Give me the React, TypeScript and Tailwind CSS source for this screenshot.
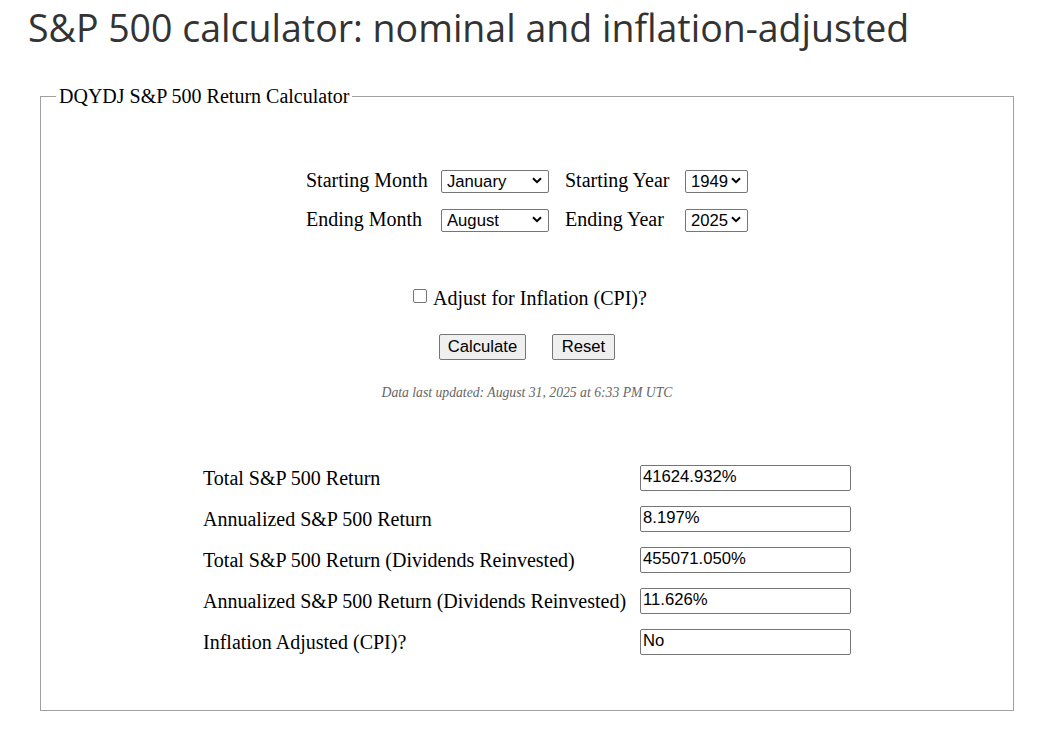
import React from "react";

function Sel({ value, w, opts }: { value: string; w: string; opts: string[] }) {
  return (
    <div className={`relative h-[23px] ${w}`}>
      <select
        defaultValue={value}
        className="h-full w-full appearance-none rounded-[2px] border border-[#767676] bg-white pl-[5px] text-[16.67px] leading-[21px] text-black outline-none"
        style={{ fontFamily: '"Liberation Sans", Arial, sans-serif' }}
      >
        {opts.map((o) => (
          <option key={o}>{o}</option>
        ))}
      </select>
      <svg
        className="pointer-events-none absolute right-[7px] top-[8px]"
        width="10"
        height="7"
        viewBox="0 0 10 7"
      >
        <path d="M1 1.2 L5 5.2 L9 1.2" fill="none" stroke="#000" strokeWidth="2" />
      </svg>
    </div>
  );
}

const months = [
  "January",
  "February",
  "March",
  "April",
  "May",
  "June",
  "July",
  "August",
  "September",
  "October",
  "November",
  "December",
];

const results: [string, string][] = [
  ["Total S&P 500 Return", "41624.932%"],
  ["Annualized S&P 500 Return", "8.197%"],
  ["Total S&P 500 Return (Dividends Reinvested)", "455071.050%"],
  ["Annualized S&P 500 Return (Dividends Reinvested)", "11.626%"],
  ["Inflation Adjusted (CPI)?", "No"],
];

export default function App() {
  const serif = { fontFamily: '"Liberation Serif", "Times New Roman", serif' };
  const sans = { fontFamily: '"Liberation Sans", Arial, sans-serif' };
  return (
    <div className="min-h-[745px] w-[1046px] bg-white">
      <h1
        className="pl-[28px] pt-[3px] text-[37.5px] leading-[49px] text-[#333333]"
        style={{ fontFamily: '"Open Sans", sans-serif' }}
      >
        S&amp;P 500 calculator: nominal and inflation-adjusted
      </h1>
      <fieldset
        className="ml-[40px] mt-[32px] w-[974px] border border-[#a0a0a0] px-[15px] pb-[55px] text-black"
        style={serif}
      >
        <legend className="px-[3px] text-[20px] leading-[24px]">
          DQYDJ S&amp;P 500 Return Calculator
        </legend>
        <div className="mt-[61px] flex flex-col items-center">
          <div className="grid grid-cols-[135px_124px_120px_63px] gap-y-[16px] text-[20px] leading-[23px]">
            <div className="self-center">Starting Month</div>
            <Sel value="January" w="w-[108px]" opts={months} />
            <div className="self-center">Starting Year</div>
            <Sel value="1949" w="w-[63px]" opts={["1949", "2025"]} />
            <div className="self-center">Ending Month</div>
            <Sel value="August" w="w-[108px]" opts={months} />
            <div className="self-center">Ending Year</div>
            <Sel value="2025" w="w-[63px]" opts={["1949", "2025"]} />
          </div>
          <label className="mt-[55px] flex items-center pl-[6px] text-[20px] leading-[24px]">
            <span className="mr-[6px] inline-block h-[14px] w-[14px] -translate-y-[2px] rounded-[2px] border border-[#767676] bg-white" />
            Adjust for Inflation (CPI)?
          </label>
          <div className="mt-[24px] flex gap-[26px]" style={sans}>
            <button className="h-[26px] w-[87px] rounded-[2px] border border-[#767676] bg-[#efefef] text-[16.67px] leading-[20px] text-black">
              Calculate
            </button>
            <button className="h-[26px] w-[63px] rounded-[2px] border border-[#767676] bg-[#efefef] text-[16.67px] leading-[20px] text-black">
              Reset
            </button>
          </div>
          <div className="mt-[24px] text-[13.7px] italic leading-[17px] text-[#666666]">
            Data last updated: August 31, 2025 at 6:33 PM UTC
          </div>
          <div className="mt-[64px] grid grid-cols-[437px_211px] gap-y-[15px] text-[20px] leading-[23px]">
            {results.map(([l, v]) => (
              <React.Fragment key={l}>
                <div className="self-center">{l}</div>
                <div
                  className="h-[26px] rounded-[2px] border border-[#767676] bg-white pl-[2px] text-[16.67px] leading-[22px]"
                  style={sans}
                >
                  {v}
                </div>
              </React.Fragment>
            ))}
          </div>
        </div>
      </fieldset>
    </div>
  );
}
